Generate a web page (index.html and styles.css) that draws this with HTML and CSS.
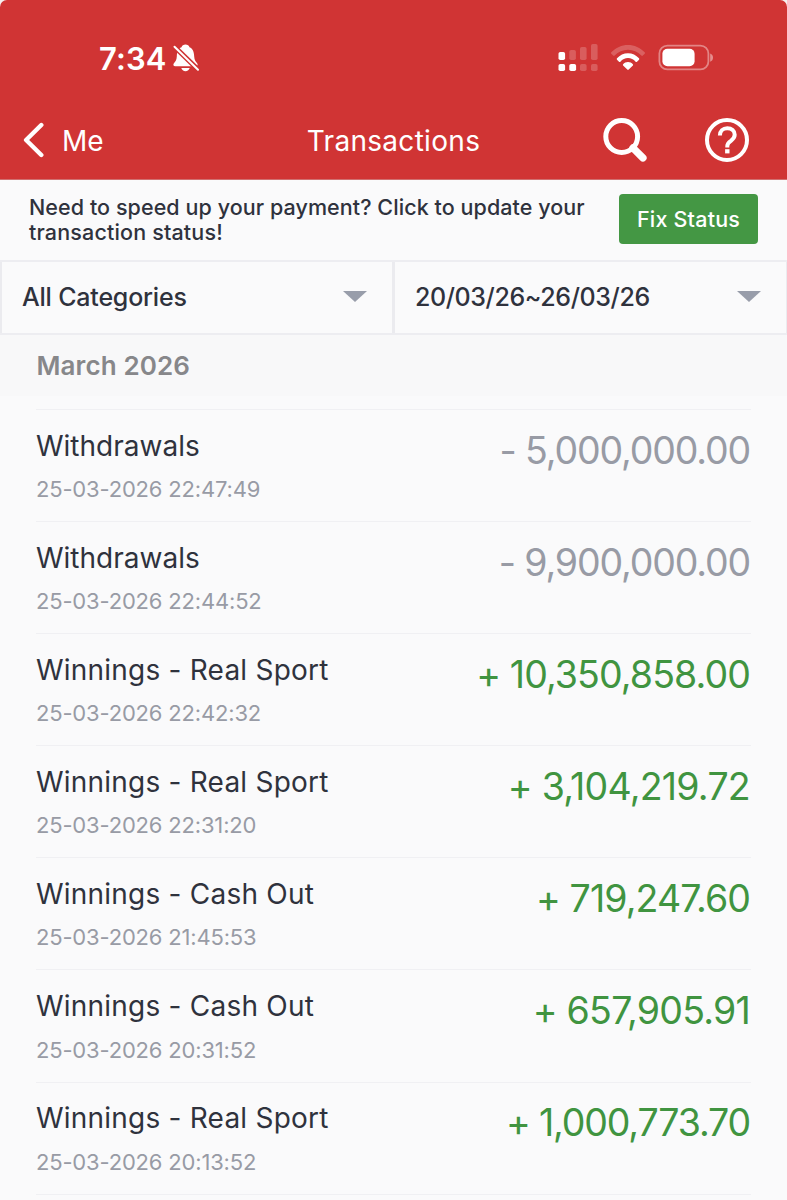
FILE: index.html
```html
<!DOCTYPE html>
<html lang="en">
<head>
<meta charset="utf-8">
<title>Transactions</title>
<link rel="stylesheet" href="styles.css">
</head>
<body>
<div class="screen">
  <header class="top">
    <div class="status">
      <span class="clock">7:34</span>
      <svg class="bell" width="28" height="30" viewBox="0 0 28 30">
        <path fill="#fff" d="M13.500 1.500c-2 0-3.500 1-4 2.700C6.300 5.300 5 8.600 4.800 13.500c-.2 3.400-1.300 4.900-2.700 6.400-1.300 1.400-.8 3.300 1.200 3.300h20.400c2 0 2.500-1.900 1.200-3.300-1.400-1.500-2.500-3-2.700-6.400-.2-4.900-1.500-8.200-4.700-9.300-.5-1.700-2-2.700-4-2.700zM9.300 25h8.400c-.5 1.900-2.200 3.300-4.200 3.300S9.800 26.900 9.300 25z"/>
        <path stroke="#d03434" stroke-width="5" d="M1.300 2.600L27.200 27.800"/>
        <path stroke="#fff" stroke-width="2" stroke-linecap="round" d="M2.500 3.800L26 26.700"/>
      </svg>
      <span class="grow"></span>
      <svg class="signal" width="40" height="28" viewBox="0 0 40 28" fill="#fff">
        <rect x="0.500" y="8" width="6.600" height="8" rx="1.800"/>
        <rect x="0.500" y="20" width="6.600" height="7" rx="1.800"/>
        <rect x="11.300" y="20" width="6.800" height="7" rx="1.800"/>
        <g opacity=".2">
          <rect x="11.300" y="6" width="6.600" height="10" rx="1.800"/>
          <rect x="22" y="3" width="6.600" height="13" rx="1.800"/>
          <rect x="33" y="0" width="6.600" height="16" rx="1.800"/>
          <rect x="22" y="20" width="6.600" height="7" rx="1.800"/>
          <rect x="33" y="20" width="6.600" height="7" rx="1.800"/>
        </g>
      </svg>
      <svg class="wifi" width="36" height="26" viewBox="0 0 36 26" fill="#fff">
        <path opacity=".22" d="M1.300 7.300C5.800 2.600 11.600 0 18 0s12.200 2.600 16.700 7.300c.4.500.4 1 0 1.400l-1.900 1.900c-.4.400-1 .4-1.400 0C27.600 6.800 23.200 4.700 18 4.700S8.400 6.800 4.600 10.600c-.4.400-1 .4-1.400 0L1.300 8.700c-.4-.4-.4-.9 0-1.400z"/>
        <path d="M7 13.300C9.900 10.100 13.700 8.200 18 8.200s8.100 1.900 11 5.100c.4.400.4 1 0 1.400l-2 2c-.4.400-1 .4-1.400 0-2-2.200-4.700-3.600-7.600-3.600s-5.600 1.400-7.600 3.600c-.4.400-1 .4-1.400 0l-2-2c-.4-.4-.4-1 0-1.400z"/>
        <path d="M13.100 19.300c1.200-1.300 3-2.200 4.900-2.200s3.700.9 4.900 2.200c.4.400.3.900 0 1.300l-4.200 4c-.4.400-1 .4-1.400 0l-4.200-4c-.3-.4-.4-.9 0-1.300z"/>
      </svg>
      <svg class="battery" width="57" height="28" viewBox="0 0 57 28">
        <rect x="1.400" y="1.600" width="49" height="23.800" rx="8" fill="none" stroke="#fff" stroke-opacity=".4" stroke-width="1.800"/>
        <rect x="4.400" y="4.700" width="32.200" height="17.600" rx="5" fill="#fff"/>
        <path d="M52.200 9.400c1.800.6 2.800 2.200 2.800 4.200s-1 3.600-2.800 4.200z" fill="#fff" fill-opacity=".45"/>
      </svg>
    </div>
    <nav class="nav">
      <div class="back">
        <svg width="22" height="36" viewBox="0 0 22 36"><path d="M18.300 3L3.100 18l15.200 15" fill="none" stroke="#fff" stroke-width="4.400" stroke-linecap="round" stroke-linejoin="round"/></svg>
        <span class="me">Me</span>
      </div>
      <h1 class="title">Transactions</h1>
      <div class="actions">
        <svg width="46" height="46" viewBox="0 0 46 46" fill="none" stroke="#fff"><circle cx="19.700" cy="19.500" r="15.900" stroke-width="5"/><path d="M31 31l9.900 9.900" stroke-width="7.400" stroke-linecap="round"/></svg>
        <svg width="46" height="46" viewBox="0 0 46 46" fill="none" stroke="#fff"><circle cx="23" cy="23" r="20" stroke-width="4"/><path d="M15.900 18.600c0-4.500 3.100-7.300 7.400-7.300s7.400 2.700 7.400 6.500c0 2.800-1.500 4.300-3.800 6-2.300 1.600-3.600 2.700-3.600 5.300v1.300" stroke-width="4"/><path d="M21.100 34.300h4.400" stroke-width="4.200"/></svg>
      </div>
    </nav>
  </header>
  <section class="notice">
    <p class="notice-text">Need to speed up your payment? Click to update your<br><span class="second-line">transaction status!</span></p>
    <button class="fix">Fix Status</button>
  </section>
  <section class="filters">
    <div class="filter"><span class="f-cat">All Categories</span><i class="caret"></i></div>
    <div class="filter"><span class="f-date">20/03/26~26/03/26</span><i class="caret"></i></div>
  </section>
  <h2 class="month"><span>March 2026</span></h2>
  <ul class="list">
    <li class="row"><div><p class="name wd">Withdrawals</p><p class="date">25-03-2026 22:47:49</p></div><p class="amount tight">- 5,000,000.00</p></li>
    <li class="row"><div><p class="name wd">Withdrawals</p><p class="date">25-03-2026 22:44:52</p></div><p class="amount tight">- 9,900,000.00</p></li>
    <li class="row"><div><p class="name">Winnings - Real Sport</p><p class="date">25-03-2026 22:42:32</p></div><p class="amount plus">+ 10,350,858.00</p></li>
    <li class="row"><div><p class="name">Winnings - Real Sport</p><p class="date">25-03-2026 22:31:20</p></div><p class="amount plus loose">+ 3,104,219.72</p></li>
    <li class="row"><div><p class="name">Winnings - Cash Out</p><p class="date">25-03-2026 21:45:53</p></div><p class="amount plus">+ 719,247.60</p></li>
    <li class="row"><div><p class="name">Winnings - Cash Out</p><p class="date">25-03-2026 20:31:52</p></div><p class="amount plus loose">+ 657,905.91</p></li>
    <li class="row"><div><p class="name">Winnings - Real Sport</p><p class="date">25-03-2026 20:13:52</p></div><p class="amount plus tight">+ 1,000,773.70</p></li>
    <li class="row"></li>
  </ul>
</div>
</body>
</html>
```

FILE: styles.css
```css
* { box-sizing: border-box; margin: 0; padding: 0; }
body { background: #fafafb; font-family: Inter, "Liberation Sans", sans-serif; color: #2f323d; }
.screen { width: 787px; height: 1200px; overflow: hidden; background: linear-gradient(#f6f0ef 0 20px, #fafafb 20px); }
.top { height: 180px; background: #d03434; border-radius: 7px 7px 0 0; color: #fff; padding-top: 36px; border-bottom: 1px solid #d07070; }
.status { height: 44px; display: flex; align-items: center; padding: 0 72px 0 99px; }
.clock { font-size: 31px; font-weight: 600; line-height: 44px; padding-top: 2px; letter-spacing: 0.1px; }
.bell { margin-left: 6px; }
.grow { flex: 1; }
.wifi { margin-left: 12px; }
.battery { margin-left: 12px; }
.nav { height: 80px; margin-top: 20px; padding: 0 37px 0 23px; display: grid; grid-template-columns: 1fr auto 1fr; align-items: center; }
.back { display: flex; align-items: center; gap: 17px; }
.me, .title { font-size: 28px; font-weight: 400; line-height: 40px; padding-top: 1px; }
.title { letter-spacing: 0.3px; padding: 2px 0 0 14px; }
.actions { display: flex; justify-content: flex-end; gap: 56px; }
.notice { height: 80px; padding: 14px 29px 0 29px; display: flex; justify-content: space-between; align-items: flex-start; }
.notice-text { font-size: 21.500px; line-height: 25px; font-weight: 500; letter-spacing: 0.070px; white-space: nowrap; padding-top: 1px; }
.second-line { letter-spacing: 0.160px; }
.fix { width: 139px; height: 50px; border: 0; border-radius: 4px; background: #449744; color: #fff; font: 500 21.500px/50px Inter, sans-serif; letter-spacing: 0.200px; white-space: nowrap; }
.filters { height: 75px; display: grid; grid-template-columns: 393px 394px; border: solid #ededf1; border-width: 2px 0; }
.filter { display: flex; align-items: center; justify-content: space-between; padding: 0 25px 2px 20px; border: solid #ebebef; border-width: 0 1px 0 2px; font-size: 25px; font-weight: 500; }
.f-cat { letter-spacing: -0.200px; }
.f-date { letter-spacing: -0.400px; }
.caret { border: solid transparent; border-width: 11px 12px 0; border-top-color: #989daa; }
.month { height: 74px; }
.month span { display: block; height: 61px; background: #f8f8f9; padding-left: 36.500px; font-size: 26px; line-height: 61px; font-weight: 600; letter-spacing: 0.100px; color: #87878a; }
.list { list-style: none; padding: 0 36px; }
.row { height: 112.100px; border-top: 1px solid #f0f0f3; display: flex; justify-content: space-between; }
.name { font-size: 28px; line-height: 34px; padding-top: 18.600px; letter-spacing: 0.220px; white-space: nowrap; }
.wd { letter-spacing: 0; }
.date { font-size: 22px; line-height: 28px; margin-top: 12.500px; color: #989ba5; letter-spacing: -0.180px; white-space: nowrap; }
.amount { font-size: 37.500px; line-height: 44px; padding: 18.900px 1px 0 0; color: #989ba5; letter-spacing: -0.900px; white-space: nowrap; }
.tight { letter-spacing: -1.150px; }
.loose { letter-spacing: -0.750px; }
.plus { color: #409440; }
```
